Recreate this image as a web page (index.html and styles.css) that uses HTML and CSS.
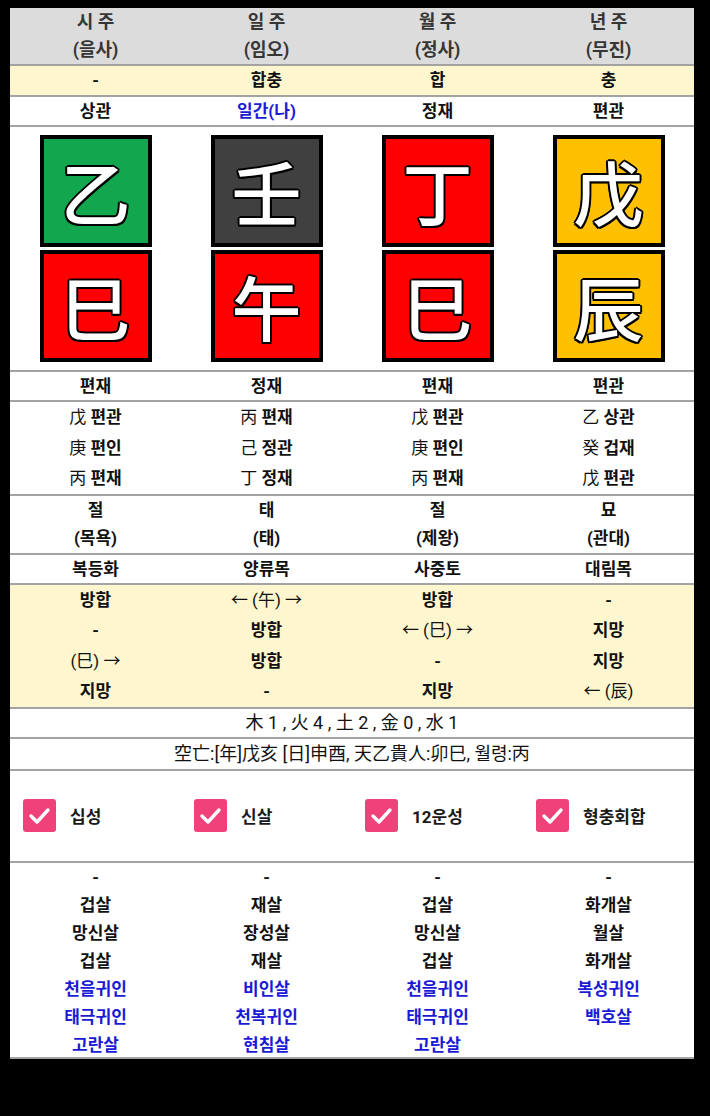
FILE: index.html
```html
<!DOCTYPE html>
<html lang="ko">
<head>
<meta charset="utf-8">
<link rel="stylesheet" href="styles.css">
</head>
<body>
<div class="page">
  <div class="sec head">
    <div><div>시 주</div><div>(을사)</div></div>
    <div><div>일 주</div><div>(임오)</div></div>
    <div><div>월 주</div><div>(정사)</div></div>
    <div><div>년 주</div><div>(무진)</div></div>
  </div>
  <div class="sec yellow l29">
    <div>-</div><div>합충</div><div>합</div><div>충</div>
  </div>
  <div class="sec l28">
    <div>상관</div><div class="blue">일간(나)</div><div>정재</div><div>편관</div>
  </div>
  <div class="sec boxes">
    <div class="pillar"><div class="gz green">乙</div><div class="gz red">巳</div></div>
    <div class="pillar"><div class="gz dark">壬</div><div class="gz red">午</div></div>
    <div class="pillar"><div class="gz red">丁</div><div class="gz red">巳</div></div>
    <div class="pillar"><div class="gz amber">戊</div><div class="gz amber">辰</div></div>
  </div>
  <div class="sec l28">
    <div>편재</div><div>정재</div><div>편재</div><div>편관</div>
  </div>
  <div class="sec jj">
    <div><div><span class="hj">戊</span> 편관</div><div><span class="hj">庚</span> 편인</div><div><span class="hj">丙</span> 편재</div></div>
    <div><div><span class="hj">丙</span> 편재</div><div><span class="hj">己</span> 정관</div><div><span class="hj">丁</span> 정재</div></div>
    <div><div><span class="hj">戊</span> 편관</div><div><span class="hj">庚</span> 편인</div><div><span class="hj">丙</span> 편재</div></div>
    <div><div><span class="hj">乙</span> 상관</div><div><span class="hj">癸</span> 겁재</div><div><span class="hj">戊</span> 편관</div></div>
  </div>
  <div class="sec l285">
    <div><div>절</div><div>(목욕)</div></div>
    <div><div>태</div><div>(태)</div></div>
    <div><div>절</div><div>(제왕)</div></div>
    <div><div>묘</div><div>(관대)</div></div>
  </div>
  <div class="sec l28">
    <div>복등화</div><div>양류목</div><div>사중토</div><div>대림목</div>
  </div>
  <div class="sec yellow l305">
    <div><div>방합</div><div>-</div><div class="thin">(巳) →</div><div>지망</div></div>
    <div><div class="thin">← (午) →</div><div>방합</div><div>방합</div><div>-</div></div>
    <div><div>방합</div><div class="thin">← (巳) →</div><div>-</div><div>지망</div></div>
    <div><div>-</div><div>지망</div><div>지망</div><div class="thin">← (辰)</div></div>
  </div>
  <div class="line l28 thin">木 1 , 火 4 , 土 2 , 金 0 , 水 1</div>
  <div class="line l30 thin">空亡:[年]戊亥 [日]申酉, 天乙貴人:卯巳, 월령:丙</div>
  <div class="sec checks">
    <label class="chk"><span class="box"><svg viewBox="0 0 33 33" width="33" height="33"><path d="M8 17 L14 23 L25 11" fill="none" stroke="#fff" stroke-width="3.4" stroke-linecap="round" stroke-linejoin="round"/></svg></span>십성</label>
    <label class="chk"><span class="box"><svg viewBox="0 0 33 33" width="33" height="33"><path d="M8 17 L14 23 L25 11" fill="none" stroke="#fff" stroke-width="3.4" stroke-linecap="round" stroke-linejoin="round"/></svg></span>신살</label>
    <label class="chk"><span class="box"><svg viewBox="0 0 33 33" width="33" height="33"><path d="M8 17 L14 23 L25 11" fill="none" stroke="#fff" stroke-width="3.4" stroke-linecap="round" stroke-linejoin="round"/></svg></span>12운성</label>
    <label class="chk"><span class="box"><svg viewBox="0 0 33 33" width="33" height="33"><path d="M8 17 L14 23 L25 11" fill="none" stroke="#fff" stroke-width="3.4" stroke-linecap="round" stroke-linejoin="round"/></svg></span>형충회합</label>
  </div>
  <div class="sec sinsal">
    <div><div>-</div><div>겁살</div><div>망신살</div><div>겁살</div><div class="blue">천을귀인</div><div class="blue">태극귀인</div><div class="blue">고란살</div></div>
    <div><div>-</div><div>재살</div><div>장성살</div><div>재살</div><div class="blue">비인살</div><div class="blue">천복귀인</div><div class="blue">현침살</div></div>
    <div><div>-</div><div>겁살</div><div>망신살</div><div>겁살</div><div class="blue">천을귀인</div><div class="blue">태극귀인</div><div class="blue">고란살</div></div>
    <div><div>-</div><div>화개살</div><div>월살</div><div>화개살</div><div class="blue">복성귀인</div><div class="blue">백호살</div></div>
  </div>
</div>
</body>
</html>
```
FILE: styles.css
```css
html, body {
  margin: 0;
  padding: 0;
  background: #000;
  height: 100%;
}
body {
  font-family: Roboto, "Noto Sans CJK KR", sans-serif;
}
.page {
  margin: 8px 0 0 10px;
  width: 684px;
  background: #fff;
}
.sec {
  display: grid;
  grid-template-columns: repeat(4, 1fr);
  border-bottom: 2px solid #a3a3a3;
  text-align: center;
  font-weight: 700;
  font-size: 17px;
  color: #111;
}
.head {
  background: #dcdcdc;
  color: #363636;
  font-size: 18px;
  line-height: 28px;
}
.yellow {
  background: #fdf6cf;
}
.l29 { line-height: 29px; }
.l28 { line-height: 28px; }
.l285 { line-height: 28.5px; }
.l305 { line-height: 30.5px; }
.l30 { line-height: 30px; }
.jj { line-height: 30.5px; }
.hj { font-weight: 400; }
.blue { color: #1b1bd6; }
.thin { font-weight: 400; }
.boxes {
  padding: 8px 0;
}
.pillar {
  display: flex;
  flex-direction: column;
  align-items: center;
  gap: 3px;
}
.gz {
  box-sizing: border-box;
  width: 112px;
  height: 112px;
  border: 4px solid #000;
  display: flex;
  align-items: center;
  justify-content: center;
  font-family: "Noto Sans CJK KR", "Noto Sans CJK SC", sans-serif;
  font-weight: 500;
  font-size: 70px;
  line-height: 1;
  color: #fff;
  text-shadow: 2px 0 0 #000, -2px 0 0 #000, 0 2px 0 #000, 0 -2px 0 #000,
    1.5px 1.5px 0 #000, -1.5px -1.5px 0 #000, 1.5px -1.5px 0 #000, -1.5px 1.5px 0 #000;
}
.green { background: #12a64e; }
.dark { background: #404040; }
.red { background: #fe0000; }
.amber { background: #fec000; }
.line {
  border-bottom: 2px solid #a3a3a3;
  text-align: center;
  font-size: 18px;
  color: #111;
}
.checks {
  height: 90px;
  align-items: center;
}
.chk {
  display: flex;
  align-items: center;
  gap: 14px;
  padding-left: 13px;
  font-size: 17px;
  color: #1a1a1a;
}
.box {
  width: 33px;
  height: 33px;
  border-radius: 3px;
  background: #f0427a;
  display: block;
}
.box svg { display: block; }
.sinsal {
  height: 194px;
  overflow: hidden;
  line-height: 28px;
  align-items: start;
}
```
